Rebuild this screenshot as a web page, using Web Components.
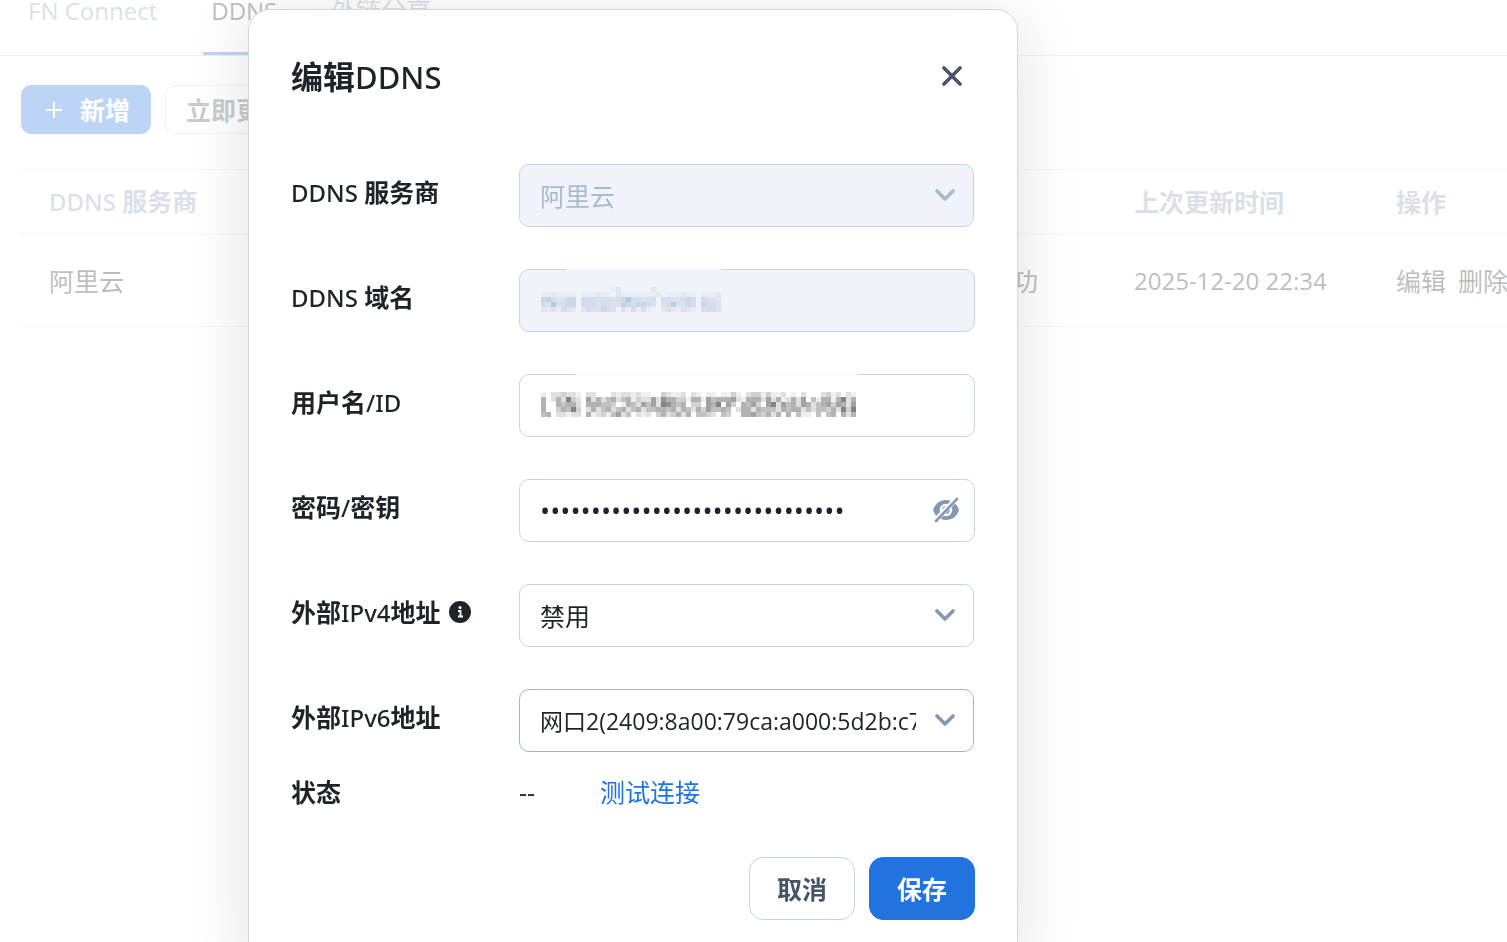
<!DOCTYPE html>
<html lang="zh-CN">
<head>
<meta charset="utf-8">
<meta name="viewport" content="width=device-width, initial-scale=1">
<title>DDNS</title>
<style>
  body {
    margin: 0;
    height: 100vh;
    overflow: hidden;
    background: #fff;
    color: #1f2329;
    font: 25px/34px "Open Sans", "Noto Sans CJK SC", sans-serif;
    --primary: #2173df;
    --line: #c9d3e0;
    --muted: #8598b3;
    --strong: #475366;
  }
  .latin { font-family: "Noto Sans", "Open Sans", sans-serif; font-size: 24px; font-weight: 500; }
  .latin[slot], .title .latin { font-size: 31px; }
</style>
</head>
<body>
<ddns-page></ddns-page>
<ddns-dialog>
  <span slot="title" class="title">编辑<span class="latin">DDNS</span></span>
  <ddns-select value="阿里云" disabled><span class="latin">DDNS </span>服务商</ddns-select>
  <ddns-input mosaic="domain" disabled><span class="latin">DDNS </span>域名</ddns-input>
  <ddns-input mosaic="user">用户名<span class="latin">/ID</span></ddns-input>
  <ddns-input type="password" value="000000000000000000000000000000">密码<span class="latin">/</span>密钥</ddns-input>
  <ddns-select value="禁用" info>外部<span class="latin">IPv4</span>地址</ddns-select>
  <ddns-select value="网口2(2409:8a00:79ca:a000:5d2b:c7" active>外部<span class="latin">IPv6</span>地址</ddns-select>
  <ddns-status slot="status">状态</ddns-status>
  <ui-button slot="footer">取消</ui-button>
  <ui-button slot="footer" primary>保存</ui-button>
</ddns-dialog>

<script>
const fieldStyle = `
  :host {
    display: grid;
    grid-template-columns: 228px 1fr;
    align-items: start;
  }
  label {
    display: flex;
    align-items: center;
    gap: 8px;
    height: 56px;
    font-weight: 700;
    line-height: 56px;
    white-space: pre;
  }
  .box { display: grid; align-items: center; }
  .box > * { grid-area: 1 / 1; }
  input, select {
    box-sizing: border-box;
    width: 100%;
    height: 63px;
    margin: 0;
    padding: 0 57px 0 20px;
    border: 1px solid var(--line);
    border-radius: 10px;
    outline: 0;
    appearance: none;
    background: #fff;
    color: inherit;
    font: inherit;
    opacity: 1;
  }
  input:disabled, select:disabled { background: #f0f3f9; color: #a9b9d0; }
  .box > svg { justify-self: end; color: var(--muted); pointer-events: none; }
`;

class UiButton extends HTMLElement {
  connectedCallback() {
    this.attachShadow({ mode: "open" }).innerHTML = `
      <style>
        :host { display: block; }
        button {
          display: flex;
          align-items: center;
          gap: 14px;
          height: 63px;
          padding: 0 27px;
          border: 1px solid var(--line);
          border-radius: 14px;
          background: #fff;
          color: var(--strong);
          font: inherit;
          font-weight: 700;
          white-space: nowrap;
        }
        :host([small]) button { height: 49px; padding: 0 20px; border-radius: 10px; }
        :host([primary]) button { border-color: var(--primary); background: var(--primary); color: #fff; }
      </style>
      <button type="button"><slot name="icon"></slot><slot></slot></button>`;
  }
}

// Rows of darkness levels, one digit per 5px cell
const MOSAICS = {
  domain: {
    color: "#8ca4c4",
    rows: [
      "000000000000001200000020000000000000",
      "112111101112110211111112011121101112",
      "564335504443443458443340443345404332",
      "438345504443443365455430347335405443",
      "223143202433543031414100232132103443",
    ],
  },
  user: {
    color: "#222222",
    rows: [
      "102232210220002122121100321120210110113102331311201020002312021",
      "502528320625245245132262755331551645556215552625125260415515825",
      "500545520555443015426462875450330658063054630682645265245636526",
      "500354830252452452452445545254253644540255254442545524244352838",
      "450221220512314624021203523525044320430055643525050411040450525",
    ],
  },
};

function mosaic({ rows, color }) {
  const cells = rows.flatMap((row, y) =>
    [...row].map((n, x) => `<rect x="${x * 5}" y="${y * 5}" width="5" height="5" fill-opacity="${n * 0.07}"/>`));
  const width = rows[0].length * 5;
  return `<svg class="mosaic" width="${width}" height="25" viewBox="0 0 ${width} 25" fill="${color}" shape-rendering="crispEdges" aria-hidden="true">${cells.join("")}</svg>`;
}

class DdnsInput extends HTMLElement {
  connectedCallback() {
    const kind = this.getAttribute("mosaic");
    const type = this.getAttribute("type") || "text";
    this.attachShadow({ mode: "open" }).innerHTML = `
      <style>
        ${fieldStyle}
        input[type="password"] { font-size: 27px; }
        .box > .mosaic { justify-self: start; align-self: start; margin: 18px 0 0 22px; }
        .box > .patch { justify-self: start; align-self: start; height: 1px; }
        .domain { width: 155px; margin-left: 47px; background: #f0f3f9; }
        .user { width: 283px; margin-left: 56px; background: #f5f7fa; }
        .eye { margin: 0 15px 2px 0; }
      </style>
      <label for="control"><span><slot></slot></span></label>
      <div class="box">
        <input id="control" type="${type}" value="${this.getAttribute("value") || ""}" ${this.hasAttribute("disabled") ? "disabled" : ""}>
        ${kind ? mosaic(MOSAICS[kind]) + `<i class="patch ${kind}"></i>` : ""}
        ${type === "password" ? `
        <svg class="eye" width="28" height="26" viewBox="0 0 28 26" fill="none" aria-hidden="true">
          <path fill="currentColor" d="M1 13C3 6.500 8 3 14 3s11 3.500 13 10c-2 6.500-7 10-13 10S3 19.500 1 13Z"/>
          <circle cx="14" cy="13" r="5" stroke="#fff" stroke-width="2.500"/>
          <path stroke="#fff" stroke-width="5" d="M1 26 26 0"/>
          <path stroke="currentColor" stroke-width="2.600" stroke-linecap="round" d="M4 24 25 2"/>
        </svg>` : ""}
      </div>`;
  }
}

class DdnsSelect extends HTMLElement {
  connectedCallback() {
    this.attachShadow({ mode: "open" }).innerHTML = `
      <style>
        ${fieldStyle}
        .box { padding-right: 1px; }
        :host([active]) select { border-color: #a3b3ca; font-size: 23px; }
        :host([disabled]) .box > svg { color: #a9b9d0; }
        .chevron { margin: 0 19px 2px 0; }
      </style>
      <label for="control">
        <span><slot></slot></span>${this.hasAttribute("info") ? `<svg width="22" height="22" viewBox="0 0 22 22" aria-hidden="true">
          <circle cx="11" cy="11" r="11" fill="currentColor"/>
          <circle cx="11" cy="6.500" r="1.500" fill="#fff"/>
          <path d="M9 10h2.500v5M9 15.500h5" fill="none" stroke="#fff" stroke-width="1.800"/>
        </svg>` : ""}
      </label>
      <div class="box">
        <select id="control" ${this.hasAttribute("disabled") ? "disabled" : ""}><option>${this.getAttribute("value")}</option></select>
        <svg class="chevron" width="20" height="14" viewBox="0 0 20 14" fill="none" aria-hidden="true">
          <path d="m2 3 8 8 8-8" stroke="currentColor" stroke-width="3.600" stroke-linecap="round" stroke-linejoin="round"/>
        </svg>
      </div>`;
  }
}

class DdnsStatus extends HTMLElement {
  connectedCallback() {
    this.attachShadow({ mode: "open" }).innerHTML = `
      <style>
        :host { display: grid; grid-template-columns: 228px 1fr; }
        b { font-weight: 700; }
        div { display: flex; gap: 65px; }
        a { color: var(--primary); text-decoration: none; }
      </style>
      <b><slot></slot></b>
      <div><span>--</span><a href="#test">测试连接</a></div>`;
  }
}

class DdnsDialog extends HTMLElement {
  connectedCallback() {
    this.attachShadow({ mode: "open" }).innerHTML = `
      <style>
        :host {
          position: fixed;
          inset: 0;
          overflow: hidden;
          padding: 9px 0 0 248px;
          background: rgba(255, 255, 255, 0.7);
        }
        section {
          box-sizing: border-box;
          max-width: 770px;
          min-height: 100%;
          padding: 44px 42px 42px;
          border: 1px solid #d5d7d9;
          border-radius: 22px;
          background: #fff;
          box-shadow: 0 8px 64px rgba(0, 0, 0, 0.12);
        }
        header { display: flex; justify-content: space-between; margin-bottom: 64px; }
        h1 { margin: 0; height: 46px; font-size: 32px; line-height: 46px; font-weight: 700; }
        header button {
          display: grid;
          place-items: center;
          width: 46px;
          height: 44px;
          padding: 0;
          border: 0;
          background: none;
          color: var(--strong);
        }
        form { display: grid; gap: 42px; margin-bottom: 23px; }
        footer { display: flex; justify-content: flex-end; gap: 14px; margin-top: 48px; }
      </style>
      <section role="dialog" aria-labelledby="title">
        <header>
          <h1 id="title"><slot name="title"></slot></h1>
          <button type="button" aria-label="关闭">
            <svg width="20" height="20" viewBox="0 0 20 20" fill="none">
              <path d="m2 2 16 16M18 2 2 18" stroke="currentColor" stroke-width="3.600" stroke-linecap="round"/>
            </svg>
          </button>
        </header>
        <form><slot></slot></form>
        <slot name="status"></slot>
        <footer><slot name="footer"></slot></footer>
      </section>`;
  }
}

class DdnsPage extends HTMLElement {
  connectedCallback() {
    this.attachShadow({ mode: "open" }).innerHTML = `
      <style>
        :host { display: block; }
        nav { display: flex; gap: 38px; padding-left: 20px; border-bottom: 1px solid #c4c9cf; }
        nav a {
          height: 20px;
          padding: 0 8px 32px;
          border-bottom: 3px solid transparent;
          color: var(--muted);
          line-height: 20px;
          text-decoration: none;
          white-space: nowrap;
        }
        nav a[aria-current] { border-color: var(--primary); color: inherit; }
        .latin { font-size: 24px; font-weight: 400; }
        .toolbar { display: flex; gap: 14px; padding: 29px 21px 35px; }
        .wrap { padding-left: 21px; }
        table { width: 100%; table-layout: fixed; border-collapse: separate; border-spacing: 0; }
        th, td { padding: 0 0 0 28px; text-align: left; white-space: nowrap; }
        th {
          height: 63px;
          border-top: 1px solid #e6e9ed;
          border-bottom: 2px solid #e6e9ed;
          color: var(--muted);
        }
        th .latin { font-family: "Noto Sans", "Open Sans", sans-serif; font-weight: 500; }
        td { height: 91px; border-bottom: 1px solid #e6e9ed; }
        .state { width: 168px; }
        .time { width: 234px; }
        .ops { width: 111px; }
        td div { display: flex; gap: 12px; }
        td a { color: inherit; text-decoration: none; }
      </style>
      <nav>
        <a href="#connect"><span class="latin">FN Connect</span></a>
        <a href="#ddns" aria-current="page"><span class="latin">DDNS</span></a>
        <a href="#share">外链分享</a>
      </nav>
      <div class="toolbar">
        <ui-button small primary>
          <svg slot="icon" width="24" height="24" viewBox="0 0 24 24" aria-hidden="true">
            <path d="M12 4v16M4 12h16" stroke="currentColor" stroke-width="2"/>
          </svg>新增
        </ui-button>
        <ui-button small>立即更新</ui-button>
      </div>
      <div class="wrap">
        <table>
          <thead>
            <tr><th><span class="latin">DDNS </span>服务商</th><th class="state">状态</th><th class="time">上次更新时间</th><th class="ops">操作</th></tr>
          </thead>
          <tbody>
            <tr>
              <td>阿里云</td><td>更新成功</td><td><span class="latin">2025-12-20 22:34</span></td>
              <td><div><a href="#edit">编辑</a><a href="#delete">删除</a></div></td>
            </tr>
          </tbody>
        </table>
      </div>`;
  }
}

customElements.define("ui-button", UiButton);
customElements.define("ddns-input", DdnsInput);
customElements.define("ddns-select", DdnsSelect);
customElements.define("ddns-status", DdnsStatus);
customElements.define("ddns-dialog", DdnsDialog);
customElements.define("ddns-page", DdnsPage);
</script>
</body>
</html>
